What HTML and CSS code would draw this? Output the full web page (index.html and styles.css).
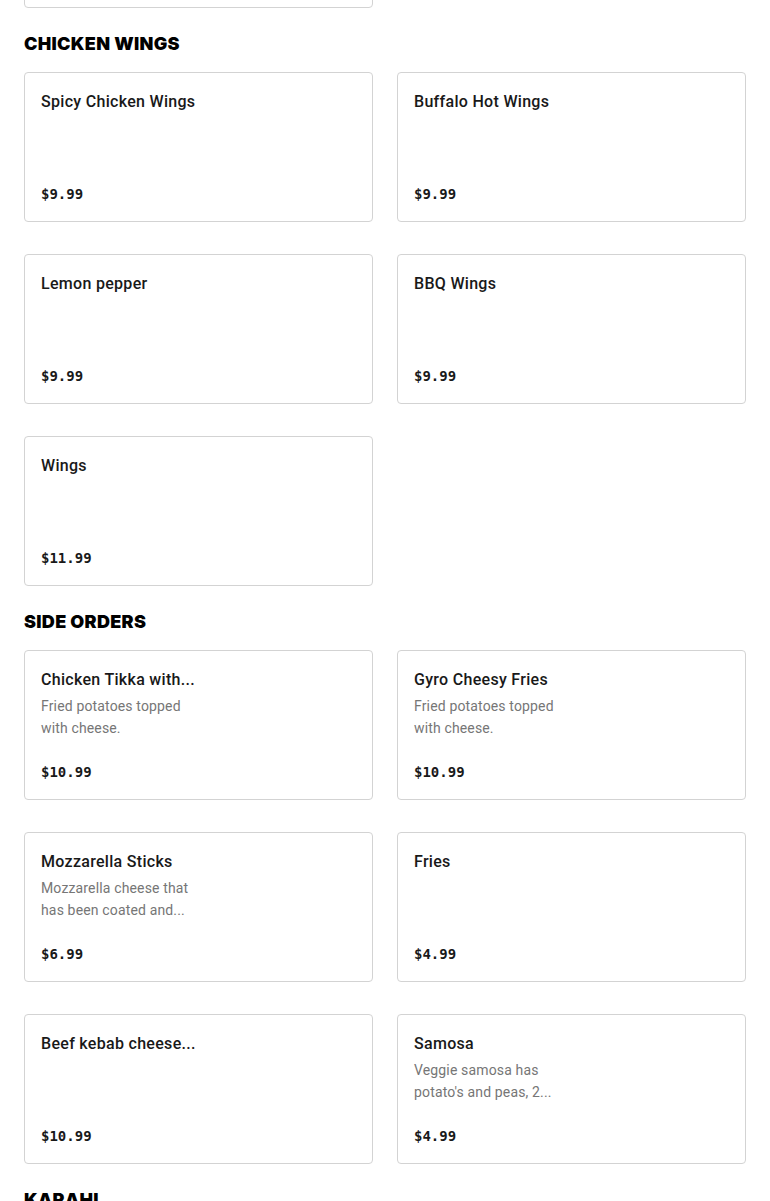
FILE: index.html
```html
<!DOCTYPE html>
<html>
<head>
<meta charset="utf-8">
<link rel="stylesheet" href="styles.css">
</head>
<body>
<main class="menu">
  <div class="grid grid-cut">
    <div class="card"></div>
  </div>

  <section class="section">
    <h2 class="section-title">Chicken Wings</h2>
    <div class="grid">
      <div class="card"><div class="info"><div class="name">Spicy Chicken Wings</div></div><div class="price">$9.99</div></div>
      <div class="card"><div class="info"><div class="name">Buffalo Hot Wings</div></div><div class="price">$9.99</div></div>
      <div class="card"><div class="info"><div class="name">Lemon pepper</div></div><div class="price">$9.99</div></div>
      <div class="card"><div class="info"><div class="name">BBQ Wings</div></div><div class="price">$9.99</div></div>
      <div class="card"><div class="info"><div class="name">Wings</div></div><div class="price">$11.99</div></div>
    </div>
  </section>

  <section class="section">
    <h2 class="section-title">Side Orders</h2>
    <div class="grid">
      <div class="card"><div class="info"><div class="name">Chicken Tikka with...</div><div class="desc">Fried potatoes topped with cheese.</div></div><div class="price">$10.99</div></div>
      <div class="card"><div class="info"><div class="name">Gyro Cheesy Fries</div><div class="desc">Fried potatoes topped with cheese.</div></div><div class="price">$10.99</div></div>
      <div class="card"><div class="info"><div class="name">Mozzarella Sticks</div><div class="desc">Mozzarella cheese that has been coated and...</div></div><div class="price">$6.99</div></div>
      <div class="card"><div class="info"><div class="name">Fries</div></div><div class="price">$4.99</div></div>
      <div class="card"><div class="info"><div class="name">Beef kebab cheese...</div></div><div class="price">$10.99</div></div>
      <div class="card"><div class="info"><div class="name">Samosa</div><div class="desc">Veggie samosa has potato's and peas, 2...</div></div><div class="price">$4.99</div></div>
    </div>
  </section>

  <section class="section">
    <h2 class="section-title">Karahi</h2>
  </section>
</main>
</body>
</html>
```
FILE: styles.css
```css
* { box-sizing: border-box; }
html, body { margin: 0; padding: 0; background: #fff; }
body {
  font-family: Roboto, "Liberation Sans", sans-serif;
  color: #191919;
}
.menu { padding: 0 24px; }
.grid {
  display: grid;
  grid-template-columns: 1fr 1fr;
  column-gap: 24px;
  row-gap: 32px;
}
.grid-cut { margin-top: -142px; }
.section { margin-top: 24px; }
.section-title {
  margin: 0 0 16px;
  font-family: Inter, "Liberation Sans", sans-serif;
  font-size: 18px;
  line-height: 24px;
  font-weight: 900;
  text-transform: uppercase;
  letter-spacing: 0.3px;
  color: #000;
}
.card {
  height: 150px;
  border: 1px solid #d3d3d3;
  border-radius: 4px;
  padding: 17px 16px 17px;
  display: flex;
  flex-direction: column;
  justify-content: space-between;
}
.info { width: 170px; }
.name {
  font-size: 16px;
  line-height: 24px;
  font-weight: 500;
  letter-spacing: 0.3px;
  white-space: nowrap;
}
.desc {
  width: 150px;
  margin-top: 3px;
  font-size: 14px;
  line-height: 22px;
  letter-spacing: 0.15px;
  color: #767676;
}
.price {
  font-family: "DejaVu Sans Mono", "Liberation Mono", monospace;
  font-size: 14px;
  line-height: 20px;
  font-weight: 700;
}
```
